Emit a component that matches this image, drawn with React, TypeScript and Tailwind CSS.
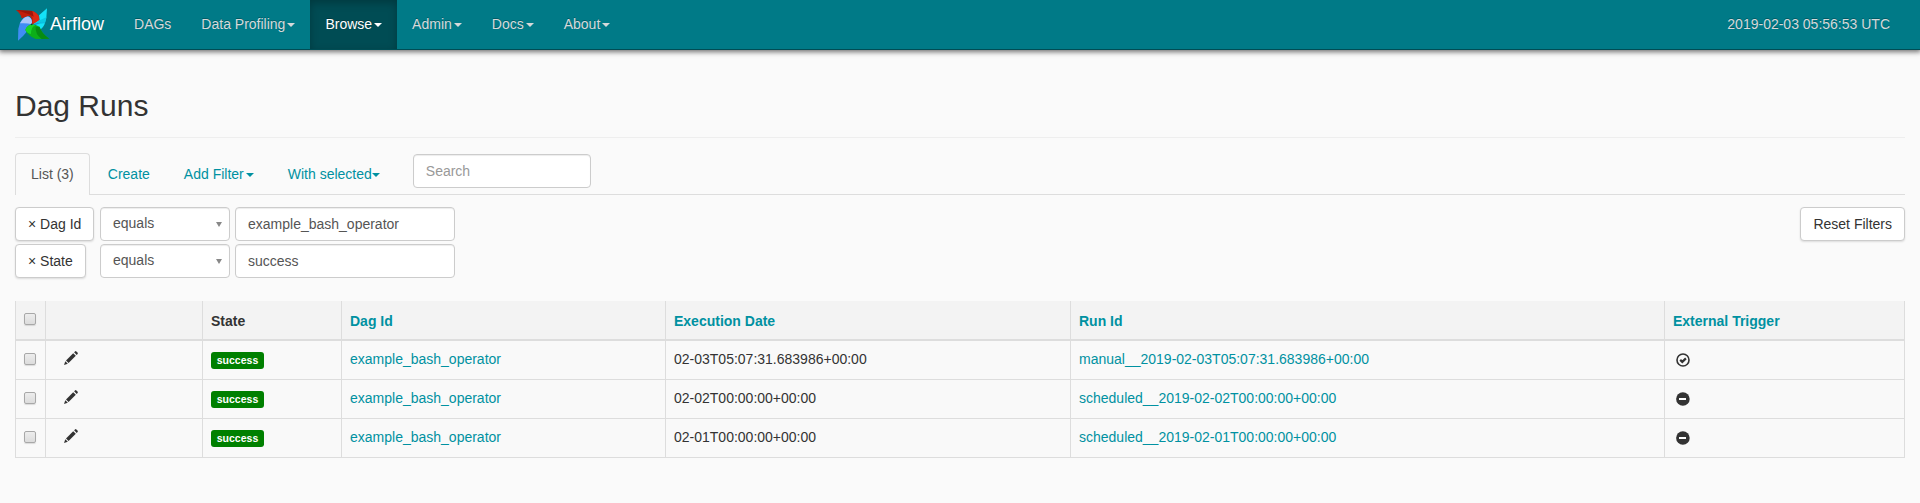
import React from "react";

const Caret = ({ className = "ml-0.5" }: { className?: string }) => (
  <span
    className={`inline-block h-0 w-0 border-x-4 border-t-4 border-x-transparent border-t-current align-middle ${className}`}
  />
);

const Logo = () => (
  <svg width="35" height="34" viewBox="0 0 105 102">
    <path d="M3 6 L52 9 Q66 14 74 29 Q74 40 62 46 L50 49 Q54 34 44 24 L20 31 Q18 18 3 6Z" fill="#c21f0c" />
    <path d="M38 8 L52 9 Q66 14 74 29 Q74 40 62 46 L52 47 Q60 26 38 8Z" fill="#dc2a14" />
    <path d="M3 6 L52 9 L56 26 Q36 15 3 6Z" fill="#9e1609" />
    <path d="M96 1 L94 30 L88 50 Q80 66 68 66 L52 50 L74 36 L72 22Z" fill="#14e2f7" />
    <path d="M94 28 L90 46 L54 50 L74 37Z" fill="#0ac8e2" />
    <path d="M92 43 Q78 42 62 50 L34 62 Q48 46 92 43Z" fill="#1c78d8" />
    <path d="M9 98 L10 62 L15 44 Q28 22 42 26 Q54 34 50 49 Q34 54 36 70 Q28 82 9 98Z" fill="#3f8df5" />
    <path d="M15 46 Q28 22 42 26 Q54 34 50 49 Q36 44 15 46Z" fill="#a9c6fb" />
    <path d="M103 92 L62 93 Q40 84 31 66 Q36 52 50 49 Q62 50 74 56 Q80 78 103 92Z" fill="#0cae18" />
    <path d="M103 92 L80 93 Q60 78 62 56 L74 58 Q80 78 103 92Z" fill="#078c12" />
    <path d="M31 66 Q36 52 50 49 L62 52 Q48 56 48 78 Q36 76 31 66Z" fill="#18d329" />
    <circle cx="50" cy="49" r="2.5" fill="#0b2a3a" />
  </svg>
);

const Pencil = () => (
  <svg width="14" height="14" viewBox="0 0 14 14" fill="#333">
    <path d="M11 .4 Q11.7-.2 12.4 .5 L13.5 1.6 Q14.2 2.3 13.6 3 L12.7 3.9 L10.1 1.3Z" />
    <path d="M9.2 2.2 L11.8 4.8 L4.6 12 L2 9.4Z" />
    <path d="M1.3 10.2 L3.8 12.7 L0 14Z" />
  </svg>
);

const OkCircle = () => (
  <svg width="14" height="14" viewBox="0 0 14 14" fill="none" stroke="#333">
    <circle cx="7" cy="7" r="6" strokeWidth="1.6" />
    <path d="M4.2 6.9 L6.3 8.9 L9.9 5.4" strokeWidth="2.2" />
  </svg>
);

const MinusSign = () => (
  <svg width="14" height="14" viewBox="0 0 14 14">
    <circle cx="6.9" cy="7" r="6.8" fill="#333" />
    <rect x="3" y="6" width="7" height="2" fill="#fff" />
  </svg>
);

const Checkbox = () => (
  <input
    type="checkbox"
    className="block h-3 w-3 appearance-none rounded-xs border border-[#a8a8a8] bg-linear-to-b from-[#ededed] to-[#dcdcdc] shadow-[0_1px_1px_rgba(0,0,0,0.12)]"
  />
);

const navItems = [
  { label: "DAGs", menu: false },
  { label: "Data Profiling", menu: true },
  { label: "Browse", menu: true, active: true },
  { label: "Admin", menu: true },
  { label: "Docs", menu: true },
  { label: "About", menu: true },
];

const filters = [
  { name: "Dag Id", value: "example_bash_operator" },
  { name: "State", value: "success" },
];

const runs = [
  { date: "02-03T05:07:31.683986+00:00", id: "manual__2019-02-03T05:07:31.683986+00:00", external: true },
  { date: "02-02T00:00:00+00:00", id: "scheduled__2019-02-02T00:00:00+00:00", external: false },
  { date: "02-01T00:00:00+00:00", id: "scheduled__2019-02-01T00:00:00+00:00", external: false },
];

const button =
  "h-[34px] rounded border border-[#ccc] bg-white px-3 leading-5 text-[#333] shadow-[0_1px_2px_rgba(0,0,0,0.12)]";
const input =
  "h-[34px] rounded border border-[#ccc] bg-white px-3 leading-5 text-[#555] shadow-[inset_0_1px_1px_rgba(0,0,0,0.075)] outline-none placeholder:text-[#999]";
const th = "h-10 border-r border-b-2 border-[#ddd] px-2 pt-px text-left font-bold";
const td = "h-[39px] border-r border-b border-[#ddd] px-2 pt-0 pb-0.5";

export default function App() {
  return (
    <div className="min-h-screen bg-[#fafafa] font-['Liberation_Sans',Arial,sans-serif] text-sm leading-5 text-[#333]">
      <nav className="flex h-[50px] border-b border-[#004d55] bg-[#007a87] text-[#d5d9da] shadow-[0_1px_5px_1px_rgba(0,0,0,0.55)] [text-shadow:0_-1px_0_rgba(0,0,0,0.25)]">
        <a className="flex pr-[15px] pl-[15px] text-lg text-white">
          <span className="w-[35px] pt-[8px]">
            <Logo />
          </span>
          <span className="pt-3.5 leading-5">Airflow</span>
        </a>
        {navItems.map((n) => (
          <a
            key={n.label}
            className={
              n.active
                ? "bg-[#004c54] px-[15px] pt-3.5 text-white shadow-[inset_0_3px_9px_rgba(0,0,0,0.25)]"
                : "px-[15px] pt-3.5"
            }
          >
            {n.label}
            {n.menu && <Caret />}
          </a>
        ))}
        <span className="ml-auto pt-3.5 pr-[30px]">2019-02-03 05:56:53 UTC</span>
      </nav>

      <main className="px-[15px]">
        <h2 className="mt-[39px] border-b border-[#eee] pb-[15px] text-[30px] leading-[33px]">Dag Runs</h2>

        <div className="mt-[15px] flex h-[42px] border-b border-[#ddd]">
          <a className="-mb-px mr-0.5 h-[42px] rounded-t border border-b-0 border-[#ddd] bg-[#fafafa] px-[15px] pt-2.5 text-[#555]">
            List (3)
          </a>
          <a className="mr-0.5 px-4 pt-[11px] text-[#0091a1]">Create</a>
          <a className="mr-0.5 px-4 pt-[11px] text-[#0091a1]">
            Add Filter
            <Caret />
          </a>
          <a className="mr-0.5 px-4 pt-[11px] text-[#0091a1]">
            With selected
            <Caret className="" />
          </a>
          <input placeholder="Search" className={`${input} mt-px ml-[15px] w-[178px]`} />
        </div>

        <div className="mt-3 flex items-start justify-between">
          <div className="flex flex-col gap-[3px]">
            {filters.map((f) => (
              <div key={f.name} className="flex">
                <div className="w-[85px]">
                  <button className={button}>× {f.name}</button>
                </div>
                <div className="mr-[5px] flex h-[34px] w-[130px] justify-between rounded border border-[#ccc] bg-white pt-[5px] pr-[7px] pl-3 text-[#555] shadow-[inset_0_1px_1px_rgba(0,0,0,0.075)]">
                  equals
                  <span className="mt-[9px] h-0 w-0 border-x-[3px] border-t-[5px] border-x-transparent border-t-[#888]" />
                </div>
                <input defaultValue={f.value} className={`${input} w-[220px]`} />
              </div>
            ))}
          </div>
          <button className={button}>Reset Filters</button>
        </div>

        <table className="mt-[23px] w-[1890px] table-fixed border-separate border-spacing-0">
          <colgroup>
            <col className="w-[31px]" />
            <col className="w-[157px]" />
            <col className="w-[139px]" />
            <col className="w-[324px]" />
            <col className="w-[405px]" />
            <col className="w-[594px]" />
            <col className="w-[240px]" />
          </colgroup>
          <thead className="bg-[#f3f3f3] text-[#0091a1]">
            <tr>
              <th className={`${th} border-l`}>
                <div className="-mt-1">
                  <Checkbox />
                </div>
              </th>
              <th className={th} />
              <th className={`${th} text-[#333]`}>State</th>
              <th className={th}>Dag Id</th>
              <th className={th}>Execution Date</th>
              <th className={th}>Run Id</th>
              <th className={th}>External Trigger</th>
            </tr>
          </thead>
          <tbody className="bg-[#f9f9f9]">
            {runs.map((r) => (
              <tr key={r.id}>
                <td className={`${td} border-l`}>
                  <Checkbox />
                </td>
                <td className={td}>
                  <div className="pb-0.5 pl-[10px]">
                    <Pencil />
                  </div>
                </td>
                <td className={td}>
                  <span className="mt-[3px] block h-[17px] w-[53px] rounded-[3px] bg-[green] text-center text-[10.5px] leading-[17px] font-bold text-white">
                    success
                  </span>
                </td>
                <td className={`${td} text-[#0091a1]`}>example_bash_operator</td>
                <td className={td}>{r.date}</td>
                <td className={`${td} text-[#0091a1]`}>{r.id}</td>
                <td className={td}>
                  <div className="pt-0.5 pl-[3px]">{r.external ? <OkCircle /> : <MinusSign />}</div>
                </td>
              </tr>
            ))}
          </tbody>
        </table>
      </main>
    </div>
  );
}
